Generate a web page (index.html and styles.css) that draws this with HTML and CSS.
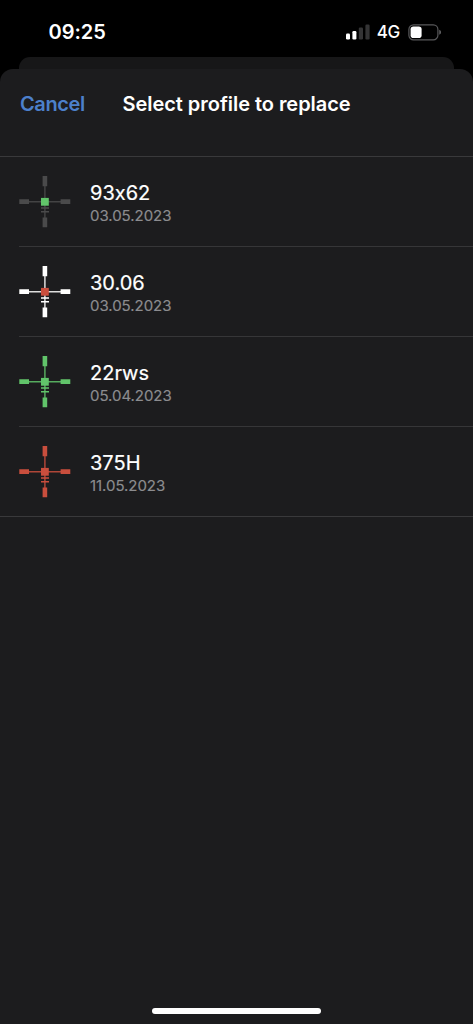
FILE: index.html
```
<!DOCTYPE html>
<html lang="en">
<head>
<meta charset="utf-8">
<title>Select profile to replace</title>
<link rel="stylesheet" href="styles.css">
</head>
<body>
<svg class="defs" aria-hidden="true">
  <symbol id="reticle" viewBox="0 0 52 52">
    <path fill="currentColor" d="M23.6 0h4.6v10.2h-4.6zM23.6 41.5h4.6v9.8h-4.6zM.3 23.3H10v4.6H.3zM41.6 23.3h9.7v4.6h-9.7z"/>
    <path stroke="currentColor" stroke-width="1.5" opacity=".85" d="M25.9 10v32M10 25.7h32"/>
    <path stroke="currentColor" stroke-width="1.6" d="M22 32h8M22 35.8h8"/>
    <path class="reticle-dot" d="M22 21.9h7.8v7.8H22z"/>
  </symbol>
</svg>
<div class="screen">
  <header class="status">
    <span class="time">09:25</span>
    <div class="indicators">
      <svg class="signal" width="24" height="16" viewBox="0 0 24 16">
        <g fill="#fff"><rect x="0" y="9.5" width="4" height="6" rx="1.2"/><rect x="6.4" y="7" width="4" height="8.5" rx="1.2"/></g>
        <g fill="#343435"><rect x="12.8" y="3.6" width="4.2" height="11.9" rx="1.2"/><rect x="19.4" y=".5" width="4.2" height="15" rx="1.2"/></g>
      </svg>
      <span class="network">4G</span>
      <svg class="battery" width="34" height="17" viewBox="0 0 34 17">
        <rect x=".9" y=".8" width="29" height="15" rx="4.6" fill="none" stroke="#59595b" stroke-width="1.2"/>
        <rect x="2.6" y="2.5" width="11" height="11.5" rx="2.8" fill="#fff"/>
        <path fill="#6a6a6c" d="M31.3 5.8c2.2.7 2.2 4.3 0 5z"/>
      </svg>
    </div>
  </header>
  <div class="sheet-behind"></div>
  <main class="sheet">
    <div class="nav">
      <span class="cancel">Cancel</span>
      <h1 class="title">Select profile to replace</h1>
    </div>
    <ul class="profiles">
      <li class="profile"><svg class="reticle gray green-dot"><use href="#reticle"/></svg><div class="info"><span class="name">93x62</span><span class="date">03.05.2023</span></div></li>
      <li class="profile"><svg class="reticle white red-dot"><use href="#reticle"/></svg><div class="info"><span class="name">30.06</span><span class="date">03.05.2023</span></div></li>
      <li class="profile"><svg class="reticle green green-dot"><use href="#reticle"/></svg><div class="info"><span class="name">22rws</span><span class="date">05.04.2023</span></div></li>
      <li class="profile"><svg class="reticle red red-dot"><use href="#reticle"/></svg><div class="info"><span class="name">375H</span><span class="date">11.05.2023</span></div></li>
    </ul>
    <div class="home"></div>
  </main>
</div>
</body>
</html>
```
FILE: styles.css
```
* { box-sizing: border-box; }
body { margin: 0; background: #000; color: #fff; font-family: Inter, "Liberation Sans", sans-serif; font-feature-settings: "calt" 0; }
.defs { display: none; }
.screen { width: 473px; height: 1024px; display: flex; flex-direction: column; overflow: hidden; }
.status { height: 57px; flex: none; display: flex; justify-content: space-between; padding: 20px 31px 0 48.5px; }
.time { font-size: 20px; line-height: 24px; font-weight: 600; }
.indicators { display: flex; align-items: flex-start; }
.signal { margin-top: 3.5px; }
.network { font-size: 17px; line-height: 25px; font-weight: 500; letter-spacing: -.3px; margin: 0 8px 0 7px; }
.battery { margin-top: 3.5px; }
.sheet-behind { height: 12px; flex: none; margin: 0 19px; background: #171718; border-radius: 11px 11px 0 0; }
.sheet { flex: 1; display: flex; flex-direction: column; background: #1c1c1e; border-radius: 13px 13px 0 0; }
.nav { height: 87px; display: flex; padding: 22px 20px 0; line-height: 26px; font-size: 20px; }
.cancel { width: 102.5px; flex: none; color: #4c80cc; font-weight: 600; letter-spacing: -.4px; }
.title { margin: 0; font-size: 20px; font-weight: 600; letter-spacing: -.04px; white-space: nowrap; }
.profiles { list-style: none; margin: 0; padding: 0; border-top: 1px solid #39393b; border-bottom: 1px solid #39393b; }
.profile { height: 90px; margin-left: 19px; padding-top: 19px; display: flex; border-bottom: 1px solid #363638; }
.profile:last-child { height: 89px; border-bottom: 0; }
.reticle { width: 52px; height: 52px; flex: none; }
.reticle-dot { fill: var(--dot); }
.gray { color: #4a4a4b; }
.white { color: #fff; }
.green { color: #61c46a; }
.red { color: #c94e3d; }
.green-dot { --dot: #61c46a; }
.red-dot { --dot: #c94e3d; }
.info { margin-left: 19px; padding-top: 4px; display: flex; flex-direction: column; }
.name { font-size: 20px; line-height: 26px; -webkit-text-stroke: .2px; }
.date { font-size: 15px; line-height: 19px; letter-spacing: -.05px; color: #8c8c8f; -webkit-text-stroke: .15px; }
.home { width: 169px; height: 6px; margin: auto auto 10px; border-radius: 3px; background: #fff; }
```
